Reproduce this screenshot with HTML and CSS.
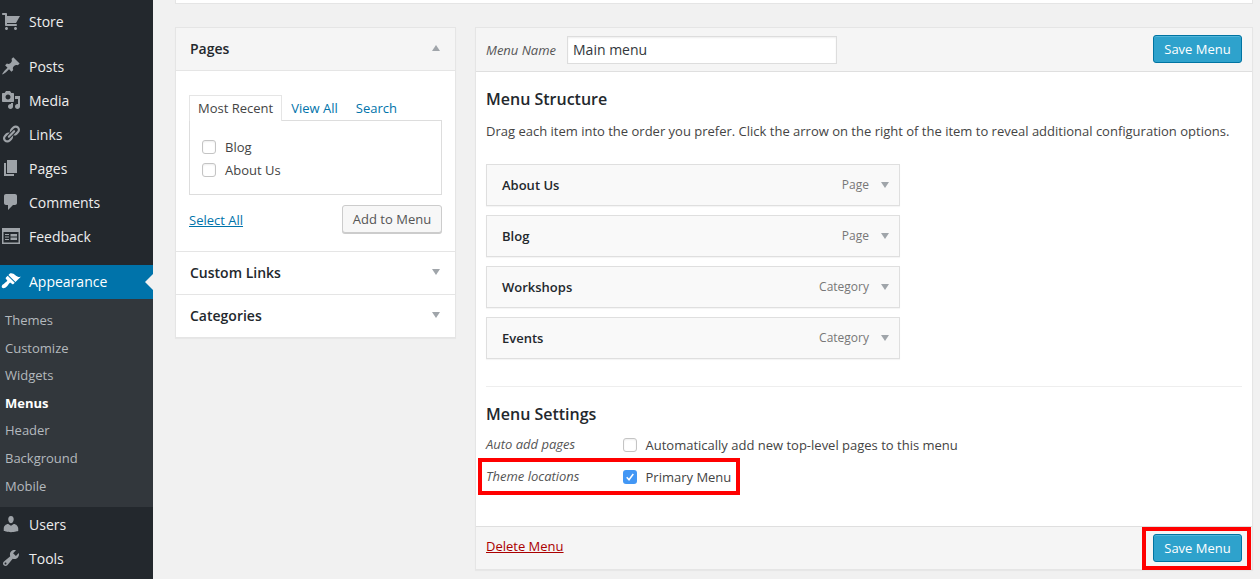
FILE: index.html
```html
<!DOCTYPE html>
<html lang="en">
<head>
    <meta charset="UTF-8">
    <title>Menus</title>
    <link rel="stylesheet" href="styles.css">
</head>
<body>
    <!-- Sidebar -->
    <nav class="sidebar">
        <a class="nav-item nav-first"><svg class="nav-icon" viewBox="0 0 20 20"><path d="M6 13h9c.55 0 1 .45 1 1s-.45 1-1 1H5c-.55 0-1-.45-1-1V4H2c-.55 0-1-.45-1-1s.45-1 1-1h3c.55 0 1 .45 1 1v2h13l-4 7H6v1zm-.5 3c.83 0 1.5.67 1.5 1.5S6.33 19 5.5 19 4 18.33 4 17.5 4.67 16 5.5 16zm9 0c.83 0 1.5.67 1.5 1.5s-.67 1.5-1.5 1.5-1.5-.67-1.5-1.5.67-1.5 1.5-1.5z"/></svg>Store</a>
        <a class="nav-item nav-group"><svg class="nav-icon" viewBox="0 0 20 20"><path d="M10.44 3.02l1.82-1.82 6.36 6.35-1.83 1.82c-1.05-.68-2.48-.57-3.41.36l-.75.75c-.92.93-1.04 2.35-.35 3.41l-1.83 1.82-2.41-2.41-2.8 2.79c-.42.42-3.38 2.71-3.8 2.29s1.86-3.39 2.28-3.81l2.79-2.79L4.1 9.36l1.83-1.82c1.05.69 2.48.57 3.4-.36l.75-.75c.93-.92 1.05-2.35.36-3.41z"/></svg>Posts</a>
        <a class="nav-item"><svg class="nav-icon" viewBox="0 0 20 20"><path d="M13 11V4c0-.55-.45-1-1-1h-1.67L9 1H5L3.67 3H2c-.55 0-1 .45-1 1v7c0 .55.45 1 1 1h10c.55 0 1-.45 1-1zM7 4.5c1.38 0 2.5 1.12 2.5 2.5S8.38 9.5 7 9.5 4.5 8.38 4.5 7 5.62 4.5 7 4.5zM14 6h5v10.5c0 1.38-1.12 2.5-2.5 2.5S14 17.88 14 16.5s1.12-2.5 2.5-2.5c.17 0 .34.02.5.05V9h-3V6zm-4 8.05V13h2v3.5c0 1.38-1.12 2.5-2.5 2.5S7 17.88 7 16.5 8.12 14 9.5 14c.17 0 .34.02.5.05z"/></svg>Media</a>
        <a class="nav-item"><svg class="nav-icon" viewBox="0 0 20 20"><path d="M17.74 2.76c1.68 1.69 1.68 4.41 0 6.1l-1.53 1.52c-1.12 1.12-2.7 1.47-4.14 1.09l2.62-2.61.76-.77.76-.76c.84-.84.84-2.2 0-3.04-.84-.85-2.2-.85-3.04 0l-.77.76-3.38 3.38c-.37-1.44-.02-3.02 1.1-4.14l1.52-1.53c1.69-1.68 4.42-1.68 6.1 0zM8.59 13.43l5.34-5.34c.42-.42.42-1.1 0-1.52-.44-.43-1.13-.39-1.53 0l-5.33 5.34c-.42.42-.42 1.1 0 1.52.44.43 1.13.39 1.52 0zm-.76 2.29l4.14-4.15c.38 1.44.03 3.02-1.09 4.14l-1.52 1.53c-1.69 1.68-4.41 1.68-6.1 0-1.68-1.68-1.68-4.42 0-6.1l1.53-1.52c1.12-1.12 2.7-1.47 4.14-1.1l-4.14 4.15c-.85.84-.85 2.2 0 3.05.84.84 2.2.84 3.04 0z"/></svg>Links</a>
        <a class="nav-item"><svg class="nav-icon" viewBox="0 0 20 20"><path d="M6 15V2h10v13H6zm-1 1h8v2H3V5h2v11z"/></svg>Pages</a>
        <a class="nav-item"><svg class="nav-icon" viewBox="0 0 20 20"><path d="M5 2h9c1.1 0 2 .9 2 2v7c0 1.1-.9 2-2 2h-2l-5 5v-5H5c-1.1 0-2-.9-2-2V4c0-1.1.9-2 2-2z"/></svg>Comments</a>
        <a class="nav-item"><svg class="nav-icon" viewBox="0 0 20 20"><path fill-rule="evenodd" d="M1 2h18v16H1V2zm1.5 4v10.5h15V6h-15zM4 8h4v1H4V8zm0 2.5h4v1H4v-1zM4 13h4v1H4v-1zM9.500 8H16v2.500H9.500V8zm0 3.500H16V14H9.500v-2.500z"/></svg>Feedback</a>
        <a class="nav-item nav-group nav-current"><svg class="nav-icon" viewBox="0 0 20 20"><path d="M14.48 11.06L7.41 3.99l1.5-1.5c.5-.56 2.3-.47 3.51.32 1.21.8 1.43 1.28 2.91 2.1 1.18.64 2.45 1.26 4.45.85zm-.71.71L6.7 4.7 4.93 6.47c-.39.39-.39 1.02 0 1.41l1.06 1.06c.39.39.39 1.03 0 1.42-.6.6-1.43 1.11-2.21 1.69-.35.26-.7.53-1.01.84C1.43 13.23 0 15.530 1.2 16.73s3.5-.23 4.84-1.57c.31-.31.58-.66.84-1.01.58-.78 1.09-1.61 1.69-2.21.39-.39 1.03-.39 1.42 0l1.06 1.06c.39.39 1.02.39 1.41 0z"/></svg>Appearance</a>
        <div class="submenu">
            <a class="sub-item">Themes</a>
            <a class="sub-item">Customize</a>
            <a class="sub-item">Widgets</a>
            <a class="sub-item sub-current">Menus</a>
            <a class="sub-item">Header</a>
            <a class="sub-item">Background</a>
            <a class="sub-item">Mobile</a>
        </div>
        <a class="nav-item"><svg class="nav-icon" viewBox="0 0 20 20"><path d="M10 9.250c-2.270 0-2.730-3.440-2.730-3.440C7 4.020 7.820 2 9.970 2c2.160 0 2.980 2.020 2.710 3.810 0 0-.41 3.440-2.680 3.440zm0 2.570L12.720 10c2.390 0 4.520 2.330 4.520 4.530v2.490s-3.650 1.130-7.240 1.130c-3.650 0-7.240-1.130-7.240-1.130v-2.490c0-2.250 1.940-4.480 4.470-4.480z"/></svg>Users</a>
        <a class="nav-item"><svg class="nav-icon" viewBox="0 0 20 20"><path d="M16.680 9.770c-1.340 1.340-3.300 1.670-4.950.99l-5.410 6.520c-.99.99-2.590.99-3.580 0s-.99-2.590 0-3.570l6.520-5.420c-.68-1.650-.35-3.610.99-4.950 1.280-1.280 3.120-1.620 4.720-1.060l-2.890 2.890 2.820 2.820 2.860-2.870c.53 1.580.18 3.390-1.080 4.650zM3.810 16.210c.4.39 1.040.39 1.430 0 .4-.4.4-1.040 0-1.430-.39-.4-1.030-.4-1.430 0-.39.39-.39 1.030 0 1.430z"/></svg>Tools</a>
    </nav>

    <main class="content">
        <div class="top-strip"></div>

        <div class="columns">
            <!-- Left: items to add -->
            <section class="accordion">
                <div class="acc-head acc-open">
                    <h3>Pages</h3><span class="arrow-up"></span>
                </div>
                <div class="acc-body">
                    <div class="tabs">
                        <span class="tab tab-active">Most Recent</span>
                        <a class="tab">View All</a>
                        <a class="tab">Search</a>
                    </div>
                    <div class="tab-panel">
                        <label class="check-row"><span class="checkbox"></span>Blog</label>
                        <label class="check-row"><span class="checkbox"></span>About Us</label>
                    </div>
                    <div class="acc-actions">
                        <a class="select-all">Select All</a>
                        <button class="btn">Add to Menu</button>
                    </div>
                </div>
                <div class="acc-head">
                    <h3>Custom Links</h3><span class="arrow-down"></span>
                </div>
                <div class="acc-head acc-last">
                    <h3>Categories</h3><span class="arrow-down"></span>
                </div>
            </section>

            <!-- Right: menu editor -->
            <section class="editor">
                <div class="editor-head">
                    <label class="name-label">Menu Name</label>
                    <input class="name-input" type="text" value="Main menu">
                    <button class="btn-primary">Save Menu</button>
                </div>
                <div class="editor-body">
                    <h3 class="title">Menu Structure</h3>
                    <p class="hint">Drag each item into the order you prefer. Click the arrow on the right of the item to reveal additional configuration options.</p>
                    <ul class="menu-items">
                        <li class="menu-item"><b>About Us</b><span class="item-type">Page</span><span class="arrow-down"></span></li>
                        <li class="menu-item"><b>Blog</b><span class="item-type">Page</span><span class="arrow-down"></span></li>
                        <li class="menu-item"><b>Workshops</b><span class="item-type">Category</span><span class="arrow-down"></span></li>
                        <li class="menu-item"><b>Events</b><span class="item-type">Category</span><span class="arrow-down"></span></li>
                    </ul>
                    <div class="settings">
                        <h3 class="title">Menu Settings</h3>
                        <div class="setting-row">
                            <span class="setting-name">Auto add pages</span>
                            <span class="checkbox"></span>
                            <span>Automatically add new top-level pages to this menu</span>
                        </div>
                        <div class="setting-row">
                            <span class="setting-name">Theme locations</span>
                            <span class="checkbox checked"><svg viewBox="0 0 14 14"><path d="M3.700 7.300l2.300 2.500 4.300-5.800" fill="none" stroke="#fff" stroke-width="1.500"/></svg></span>
                            <span>Primary Menu</span>
                        </div>
                    </div>
                </div>
                <div class="editor-foot">
                    <a class="delete-link">Delete Menu</a>
                    <button class="btn-primary">Save Menu</button>
                </div>

                <!-- Red annotation boxes -->
                <div class="mark mark-theme"></div>
                <div class="mark mark-save"></div>
            </section>
        </div>
    </main>
</body>
</html>
```

FILE: styles.css
```css
* {
    box-sizing: border-box;
}

html, body {
    height: 579px;
}

body {
    margin: 0;
    display: flex;
    overflow: hidden;
    background-color: #f1f1f1;
    color: #444;
    font-family: "Open Sans", sans-serif;
    font-size: 13px;
}

/* Sidebar */
.sidebar {
    flex: 0 0 153px;
    height: 579px;
    padding-top: 5px;
    overflow: hidden;
    background-color: #23282d;
}

.nav-item {
    display: flex;
    align-items: center;
    height: 34px;
    padding: 0 0 2px 1px;
    color: #eee;
    font-size: 14px;
}

.submenu ~ .nav-item {
    padding-bottom: 0;
}

.nav-group {
    margin-top: 11px;
}

.nav-icon {
    flex: none;
    width: 20px;
    height: 20px;
    margin-right: 8px;
    fill: #9ea3a8;
}

.nav-current {
    position: relative;
    background-color: #0073aa;
    color: #fff;
}

.nav-current .nav-icon {
    fill: #fff;
}

/* Little arrow pointing at the content */
.nav-current::after {
    content: "";
    position: absolute;
    right: 0;
    top: 9px;
    border: 8px solid transparent;
    border-left-width: 0;
    border-right-color: #f1f1f1;
}

.submenu {
    height: 208px;
    padding-top: 8px;
    background-color: #32373c;
}

.sub-item {
    display: block;
    height: 27.6px;
    padding-left: 5px;
    line-height: 27.6px;
    color: #b4b9be;
}

.sub-current {
    color: #fff;
    font-weight: 700;
}

/* Content */
.content {
    flex: 1;
    padding: 0 7px 0 22px;
}

.top-strip {
    height: 4px;
    background-color: #fff;
    border: 1px solid #e5e5e5;
    border-top: 0;
}

.columns {
    display: flex;
    align-items: flex-start;
    gap: 19px;
    margin-top: 23px;
}

/* Accordion */
.accordion {
    flex: 0 0 281px;
    background-color: #fff;
    border: 1px solid #e5e5e5;
    box-shadow: 0 1px 1px rgba(0, 0, 0, 0.04);
}

.acc-head {
    display: flex;
    align-items: center;
    justify-content: space-between;
    height: 43px;
    padding: 0 15px 2px 14px;
    border-bottom: 1px solid #e5e5e5;
}

.acc-open {
    background-color: #f5f5f5;
}

.acc-last {
    height: 42px;
    border-bottom: 0;
}

.acc-head h3 {
    margin: 0;
    color: #23282d;
    font-size: 14px;
    font-weight: 600;
}

.arrow-up, .arrow-down {
    flex: none;
    width: 0;
    height: 0;
    border-left: 4.5px solid transparent;
    border-right: 4.5px solid transparent;
}

.arrow-up {
    border-bottom: 6px solid #a0a5aa;
}

.arrow-down {
    border-top: 6px solid #a0a5aa;
}

.acc-body {
    height: 181px;
    padding: 24px 13px 0;
    border-bottom: 1px solid #e5e5e5;
}

.tabs {
    display: flex;
    height: 26px;
}

.tab {
    padding: 4px 9px 0;
    color: #0073aa;
    line-height: 18px;
}

.tab-active {
    position: relative;
    z-index: 1;
    height: 26px;
    padding: 3px 8px 0;
    color: #444;
    background-color: #fff;
    border: 1px solid #e5e5e5;
    border-bottom: 0;
}

.tab-panel {
    height: 75px;
    margin-top: -1px;
    padding: 14px 12px 0;
    border: 1px solid #ddd;
}

.check-row {
    display: flex;
    align-items: center;
    height: 23px;
}

.checkbox {
    flex: none;
    display: block;
    width: 14px;
    height: 14px;
    margin-right: 9px;
    background-color: #fff;
    border: 1px solid #c4c4c4;
    border-radius: 3px;
    box-shadow: inset 0 1px 2px rgba(0, 0, 0, 0.07);
}

.checked {
    background-color: #4297f5;
    border: 0;
    box-shadow: none;
}

.checked svg {
    display: block;
    width: 14px;
    height: 14px;
}

.acc-actions {
    display: flex;
    align-items: center;
    justify-content: space-between;
    margin-top: 10px;
}

.select-all {
    padding-top: 2px;
    color: #0073aa;
    text-decoration: underline;
}

.btn {
    width: 100px;
    height: 28px;
    padding: 0;
    color: #555;
    background-color: #f7f7f7;
    border: 1px solid #ccc;
    border-radius: 3px;
    box-shadow: 0 1px 0 #ccc;
    font: inherit;
}

/* Editor */
.editor {
    position: relative;
    flex: 1;
    height: 543px;
    display: flex;
    flex-direction: column;
    background-color: #fff;
    border: 1px solid #e5e5e5;
    box-shadow: 0 1px 1px rgba(0, 0, 0, 0.04);
}

.editor-head {
    flex: none;
    display: flex;
    align-items: center;
    height: 44px;
    padding: 0 10px;
    background-color: #f5f5f5;
    border-bottom: 1px solid #dfdfdf;
}

.name-label {
    margin-right: 11px;
    color: #555;
    font-style: italic;
}

.name-input {
    width: 270px;
    height: 28px;
    padding: 0 5px;
    color: #32373c;
    background-color: #fff;
    border: 1px solid #ddd;
    box-shadow: inset 0 1px 2px rgba(0, 0, 0, 0.07);
    font: inherit;
    font-size: 14px;
}

.btn-primary {
    width: 89px;
    height: 28px;
    margin-left: auto;
    padding: 0;
    color: #fff;
    background-color: #2ea2cc;
    border: 1px solid #0074a2;
    border-radius: 3px;
    box-shadow: inset 0 1px 0 rgba(120, 200, 230, 0.5);
    font: inherit;
}

.editor-head .btn-primary {
    margin-bottom: 2px;
}

.editor-body {
    flex: 1;
    padding: 15px 10px 0;
}

.title {
    margin: 0;
    color: #23282d;
    font-size: 16px;
    font-weight: 600;
    line-height: 24px;
}

.hint {
    margin: 11px 0 0;
    line-height: 18px;
}

.menu-items {
    margin: 24px 0 0;
    padding: 0;
    list-style: none;
}

.menu-item {
    display: flex;
    align-items: center;
    width: 414px;
    height: 42px;
    margin-bottom: 9px;
    padding: 0 10px 0 15px;
    background-color: #f9f9f9;
    border: 1px solid #dfdfdf;
    box-shadow: 0 1px 1px rgba(0, 0, 0, 0.04);
}

.menu-item b {
    color: #23282d;
    font-weight: 600;
}

.item-type {
    margin-left: auto;
    margin-right: 12px;
    padding-bottom: 1px;
    color: #777;
    font-size: 12px;
}

.settings {
    margin-top: 27px;
    padding-top: 15px;
    border-top: 1px solid #eee;
}

.setting-row {
    display: flex;
    align-items: center;
    height: 32px;
}

.settings .title + .setting-row {
    margin-top: 3px;
}

.setting-row .checkbox {
    margin-right: 8.5px;
}

.setting-name {
    flex: 0 0 137px;
    padding-bottom: 2px;
    color: #555;
    font-style: italic;
}

.editor-foot {
    flex: none;
    display: flex;
    align-items: center;
    height: 43px;
    padding: 0 10px;
    background-color: #f5f5f5;
    border-top: 1px solid #dfdfdf;
}

.delete-link {
    padding-bottom: 5px;
    color: #a00;
    text-decoration: underline;
}

/* Red annotation boxes */
.mark {
    position: absolute;
    border: 4px solid #f00;
}

.mark-theme {
    left: 2px;
    top: 430px;
    width: 262px;
    height: 37px;
}

.mark-save {
    left: 666px;
    top: 499px;
    width: 109px;
    height: 43px;
}
```
